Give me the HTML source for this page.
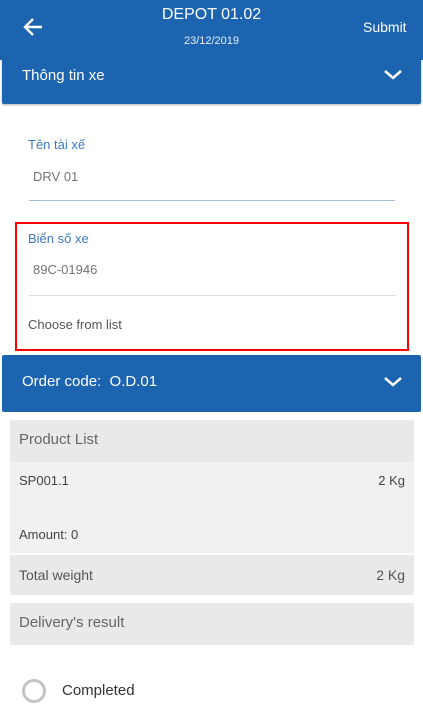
<!DOCTYPE html>
<html><head><meta charset="utf-8"><style>
*{margin:0;padding:0;box-sizing:border-box}
body{width:423px;height:716px;overflow:hidden;background:#fff;font-family:"Liberation Sans","Noto Sans CJK SC",sans-serif;position:relative}
.a{position:absolute}
.blue{background:#1d64b0}
</style></head><body>
<div class="a blue" style="left:0;top:0;width:423px;height:60px"></div>
<svg class="a" style="left:22px;top:16px" width="22" height="22" viewBox="0 0 22 22"><path d="M3 11H20M11 3L3 11L11 19" stroke="#fff" stroke-width="2.4" fill="none"/></svg>
<div class="a" style="left:0;width:423px;top:6px;text-align:center;color:#fff;font-size:16px">DEPOT 01.02</div>
<div class="a" style="left:0;width:423px;top:35px;text-align:center;color:#e8eef8;font-size:11px">23/12/2019</div>
<div class="a" style="left:363px;top:19px;color:#fff;font-size:14px">Submit</div>
<div class="a blue" style="left:2px;top:58px;width:419px;height:46px;border-radius:0 0 2px 2px;box-shadow:0 1px 2px rgba(0,0,0,.3)"></div>
<div class="a" style="left:22px;top:67px;color:#fff;font-size:15px">Thông tin xe</div>
<svg class="a" style="left:383px;top:68px" width="20" height="14" viewBox="0 0 20 14"><path d="M2 3L10 10L18 3" stroke="#fff" stroke-width="2.5" fill="none"/></svg>
<div class="a" style="left:28px;top:137px;color:#3c79c0;font-size:13px">Tên tài xế</div>
<div class="a" style="left:33px;top:169px;color:#707478;font-size:13px">DRV 01</div>
<div class="a" style="left:29px;top:200px;width:366px;height:1px;background:#a9bcd9"></div>
<div class="a" style="left:15px;top:222px;width:394px;height:129px;border:2px solid #f00"></div>
<div class="a" style="left:28px;top:231px;color:#3c79c0;font-size:13px">Biển số xe</div>
<div class="a" style="left:33px;top:262px;color:#707478;font-size:13px">89C-01946</div>
<div class="a" style="left:29px;top:295px;width:367px;height:1px;background:#ddd"></div>
<div class="a" style="left:28px;top:317px;color:#555;font-size:13px">Choose from list</div>
<div class="a blue" style="left:2px;top:355px;width:419px;height:57px;border-radius:2px"></div>
<div class="a" style="left:22px;top:373px;color:#fff;font-size:15px">Order code:&nbsp; O.D.01</div>
<svg class="a" style="left:383px;top:375px" width="20" height="14" viewBox="0 0 20 14"><path d="M2 3L10 10L18 3" stroke="#fff" stroke-width="2.5" fill="none"/></svg>
<div class="a" style="left:10px;top:420px;width:404px;height:42px;background:#e8e9e9"></div>
<div class="a" style="left:19px;top:431px;color:#666;font-size:15px">Product List</div>
<div class="a" style="left:10px;top:462px;width:404px;height:91px;background:#f1f1f1"></div>
<div class="a" style="left:19px;top:473px;color:#444;font-size:13px">SP001.1</div>
<div class="a" style="right:18px;top:473px;color:#444;font-size:13px">2 Kg</div>
<div class="a" style="left:19px;top:527px;color:#444;font-size:13px">Amount: 0</div>
<div class="a" style="left:10px;top:555px;width:404px;height:40px;background:#e8e9e9"></div>
<div class="a" style="left:19px;top:567px;color:#555;font-size:14px">Total weight</div>
<div class="a" style="right:18px;top:567px;color:#555;font-size:14px">2 Kg</div>
<div class="a" style="left:10px;top:603px;width:404px;height:42px;background:#e8e9e9"></div>
<div class="a" style="left:19px;top:614px;color:#666;font-size:15px">Delivery's result</div>
<div class="a" style="left:22px;top:679px;width:24px;height:24px;border:3px solid #c4c4c4;border-radius:50%"></div>
<div class="a" style="left:62px;top:682px;color:#333;font-size:15px">Completed</div>
</body></html>
